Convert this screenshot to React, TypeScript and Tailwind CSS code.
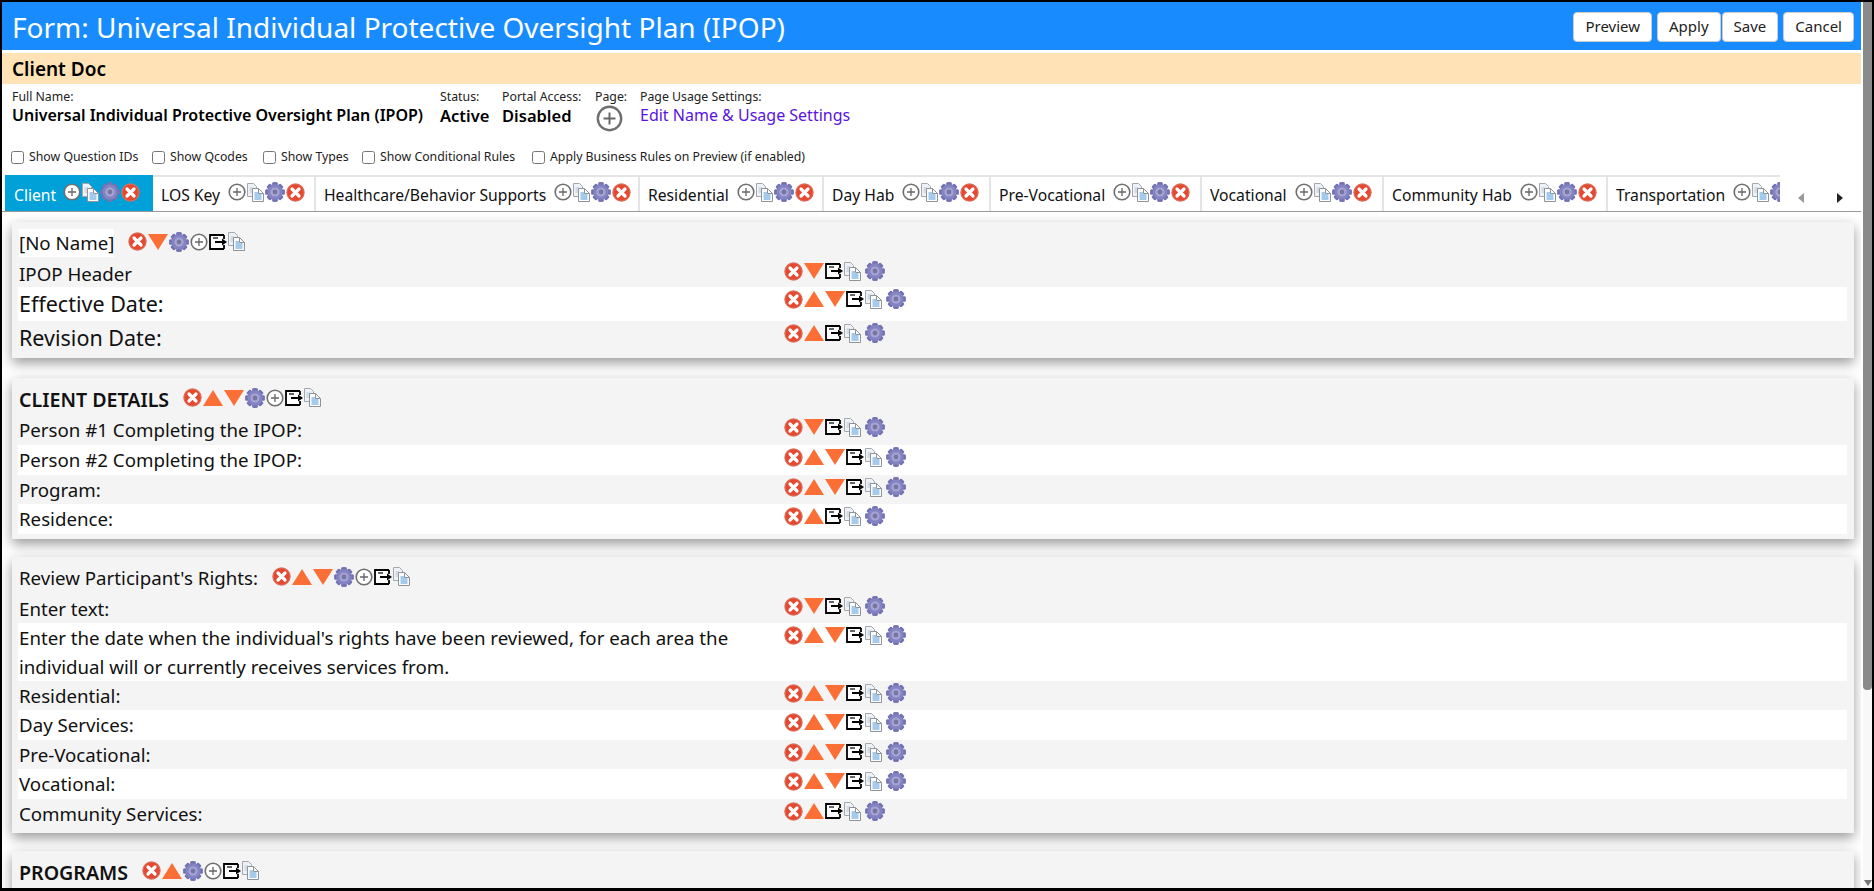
import React from 'react';

const XIcon = () => (
  <svg width="19" height="19" viewBox="0 0 19 19" className="shrink-0">
    <circle cx="9.5" cy="9.5" r="9.2" fill="#d9705f" />
    <circle cx="9.5" cy="9.5" r="8" fill="#e5492f" />
    <path d="M6 6 L13 13 M13 6 L6 13" stroke="#fff" strokeWidth="3.2" strokeLinecap="round" />
  </svg>
);

const UpIcon = () => (
  <svg width="20" height="16" viewBox="0 0 20 16" className="shrink-0">
    <polygon points="10,0 20,16 0,16" fill="#fb6f36" />
  </svg>
);

const DownIcon = () => (
  <svg width="20" height="16" viewBox="0 0 20 16" className="shrink-0">
    <polygon points="0,0 20,0 10,16" fill="#fb6f36" />
  </svg>
);

const GearIcon = () => (
  <svg width="20" height="20" viewBox="0 0 20 20" className="shrink-0">
    {[0, 45, 90, 135, 180, 225, 270, 315].map((a) => (
      <rect key={a} x="7.4" y="0.3" width="5.2" height="19.4" rx="1.2" fill="#7473b3" transform={`rotate(${a} 10 10)`} />
    ))}
    <circle cx="10" cy="10" r="7.4" fill="#8584c2" />
    <circle cx="10" cy="10" r="4.6" fill="#a5a4d4" />
    <circle cx="10" cy="10" r="2.4" fill="#77769f" />
  </svg>
);

const PlusIcon = ({ size = 18 }: { size?: number }) => (
  <svg width={size} height={size} viewBox="0 0 18 18" className="shrink-0">
    <circle cx="9" cy="9" r="7.8" fill="#fff" stroke="#6f6f6f" strokeWidth="1.6" />
    <path d="M9 5 V13 M5 9 H13" stroke="#666" strokeWidth="1.3" />
  </svg>
);

const ExportIcon = () => (
  <svg width="18" height="16" viewBox="0 0 18 16" className="shrink-0">
    <rect x="1" y="1" width="14" height="14" fill="#fff" />
    <path d="M15 1 H1 V15 H15 M15 1 V5 M15 11 V15" fill="none" stroke="#000" strokeWidth="1.8" />
    <path d="M4 4 H9" stroke="#000" strokeWidth="1.2" />
    <path d="M6 8 H14" stroke="#000" strokeWidth="2" />
    <polygon points="13,4.5 18,8 13,11.5" fill="#000" />
  </svg>
);

const CopyIcon = () => (
  <svg width="17" height="19" viewBox="0 0 17 19" className="shrink-0">
    <path d="M0.5 0.5 H6.5 L9.5 3.5 V13.5 H0.5 Z" fill="#eef1f5" stroke="#a4a8ae" />
    <path d="M2.5 5 H6 M2.5 7 H6 M2.5 9 H6" stroke="#b4c8da" strokeWidth="1" />
    <path d="M5.5 5.5 H11.5 L16.5 10.5 V18.5 H5.5 Z" fill="#fbfdff" stroke="#8f9398" />
    <path d="M11.5 5.5 V10.5 H16.5" fill="none" stroke="#8f9398" />
    <path d="M7.5 10 H11 M7.5 12 H14.5 M7.5 14 H14.5 M7.5 16 H14.5" stroke="#4f9ad8" strokeWidth="1.2" />
  </svg>
);

type Kind = 'x' | 'up' | 'down' | 'gear' | 'plus' | 'export' | 'copy';

const iconMap: Record<Kind, React.ReactNode> = {
  x: <XIcon />,
  up: <UpIcon />,
  down: <DownIcon />,
  gear: <GearIcon />,
  plus: <PlusIcon />,
  export: <ExportIcon />,
  copy: <CopyIcon />,
};

const Icons = ({ list, tight }: { list: Kind[]; tight?: boolean }) => (
  <div className="flex items-center gap-px">
    {list.map((k, i) => (
      <span key={i} className={`flex ${!tight && k === 'gear' && list[i - 1] === 'copy' ? 'ml-[3px]' : ''}`}>
        {iconMap[k]}
      </span>
    ))}
  </div>
);

const first: Kind[] = ['x', 'down', 'export', 'copy', 'gear'];
const middle: Kind[] = ['x', 'up', 'down', 'export', 'copy', 'gear'];
const last: Kind[] = ['x', 'up', 'export', 'copy', 'gear'];

const tabs = [
  { name: 'LOS Key', w: 'w-[163px]' },
  { name: 'Healthcare/Behavior Supports', w: 'w-[324px]' },
  { name: 'Residential', w: 'w-[184px]' },
  { name: 'Day Hab', w: 'w-[167px]' },
  { name: 'Pre-Vocational', w: 'w-[211px]' },
  { name: 'Vocational', w: 'w-[182px]' },
  { name: 'Community Hab', w: 'w-[224px]' },
  { name: 'Transportation', w: 'w-[190px]' },
];

type RowData = { label: string; big?: boolean; h: string; icons: Kind[] };

const Row = ({ row, odd }: { row: RowData; odd: boolean }) => (
  <div className={`flex items-start pl-[1px] ${row.h} ${odd ? 'bg-white' : ''}`}>
    <div className={`w-[765px] shrink-0 text-[#111] ${row.big ? 'text-[21.5px] leading-[33px]' : 'text-[18.7px] leading-[29px]'}`}>
      {row.label}
    </div>
    <div className="pt-[2px]">
      <Icons list={row.icons} />
    </div>
  </div>
);

const Section = ({ title, bold, hl, titleIcons, rows, h }: {
  title: string;
  bold?: boolean;
  hl?: boolean;
  titleIcons: Kind[];
  rows: RowData[];
  h: string;
}) => (
  <div className={`bg-[#f4f4f4] pl-[6px] pr-[7px] shadow-[0_5px_12px_rgba(0,0,0,0.4)] ${h}`}>
    <div className="flex h-[37px] items-center pl-[1px] pt-[5px]">
      <span className={`text-[#111] ${bold ? 'text-[19.6px] font-semibold' : 'text-[18.7px]'} ${hl ? 'bg-white' : ''}`}>{title}</span>
      <div className="mb-[3px] ml-[14px]">
        <Icons list={titleIcons} />
      </div>
    </div>
    {rows.map((r, i) => (
      <Row key={r.label} row={r} odd={i % 2 === 1} />
    ))}
  </div>
);

const Check = ({ label, w }: { label: string; w: string }) => (
  <label className={`flex items-center gap-[5px] text-[12.3px] text-[#222] ${w}`}>
    <input type="checkbox" className="m-0 h-[13px] w-[13px]" />
    {label}
  </label>
);

export default function App() {
  return (
    <div className="flex h-screen flex-col overflow-hidden border-x-2 border-t-2 border-b-[3px] border-black bg-white font-['Noto_Sans','Open_Sans',sans-serif]">
      <div className="flex min-h-0 flex-1">
        <div className="flex min-w-0 flex-1 flex-col">
          {/* Title bar */}
          <div className="flex h-[48px] shrink-0 items-center justify-between bg-[#188cff] pl-[10px] pr-[7px]">
            <h1 className="pt-[2px] text-[28px] font-normal text-white">Form: Universal Individual Protective Oversight Plan (IPOP)</h1>
            <div className="mt-[1px] flex items-center">
              {['Preview', 'Apply', 'Save', 'Cancel'].map((b, i) => (
                <button
                  key={b}
                  className={`h-[30px] rounded-[4px] border border-[#ccc] bg-white px-[11px] text-[15px] text-[#222] ${i === 0 ? 'mr-[5px]' : ''} ${i === 1 ? 'mr-px' : ''} ${i === 2 ? 'mr-[5px]' : ''}`}
                >
                  {b}
                </button>
              ))}
            </div>
          </div>

          {/* Client doc banner */}
          <div className="mt-[3px] flex h-[31px] shrink-0 items-center bg-[#ffe3b6] pl-[10px] pt-[2px] text-[19px] font-semibold text-black">
            Client Doc
          </div>

          {/* Meta */}
          <div className="flex shrink-0 pl-[10px] pt-[5px]">
            <div className="w-[428px]">
              <div className="text-[12.3px] leading-[16px] text-[#222]">Full Name:</div>
              <div className="text-[16px] font-semibold leading-[21px] text-black">Universal Individual Protective Oversight Plan (IPOP)</div>
            </div>
            <div className="w-[62px]">
              <div className="text-[12.3px] leading-[16px] text-[#222]">Status:</div>
              <div className="text-[16.5px] font-semibold leading-[21px] text-black">Active</div>
            </div>
            <div className="w-[93px]">
              <div className="text-[12.3px] leading-[16px] text-[#222]">Portal Access:</div>
              <div className="text-[16.5px] font-semibold leading-[21px] text-black">Disabled</div>
            </div>
            <div className="w-[45px]">
              <div className="text-[12.3px] leading-[16px] text-[#222]">Page:</div>
              <div className="pl-[1px]"><PlusIcon size={27} /></div>
            </div>
            <div>
              <div className="text-[12.3px] leading-[16px] text-[#222]">Page Usage Settings:</div>
              <div className="text-[16px] leading-[21px] text-[#5a14e0]">Edit Name &amp; Usage Settings</div>
            </div>
          </div>

          {/* Options */}
          <div className="mt-[16px] flex shrink-0 pl-[9px]">
            <Check label="Show Question IDs" w="w-[141px]" />
            <Check label="Show Qcodes" w="w-[111px]" />
            <Check label="Show Types" w="w-[99px]" />
            <Check label="Show Conditional Rules" w="w-[170px]" />
            <Check label="Apply Business Rules on Preview (if enabled)" w="w-[320px]" />
          </div>

          {/* Tabs */}
          <div className="mt-[9px] flex h-[37px] shrink-0 border-b border-[#999]">
            <div className="flex w-[1778px] shrink-0 overflow-hidden pl-[3px]">
              <div className="flex h-full w-[148px] shrink-0 items-start bg-[#00a0d8] pl-[9px] pt-[7px] text-[15.7px] text-white">
                <span className="mr-[7px] mt-[2px]">Client</span>
                <Icons list={['plus', 'copy', 'gear', 'x']} tight />
              </div>
              {tabs.map((t) => (
                <div key={t.name} className={`flex h-full shrink-0 items-start border-r-2 border-t-2 border-[#e4e4e4] pl-[8px] pt-[5px] text-[15.7px] text-[#111] ${t.w}`}>
                  <span className="mr-[8px] mt-[2px] whitespace-nowrap">{t.name}</span>
                  <Icons list={['plus', 'copy', 'gear', 'x']} tight />
                </div>
              ))}
            </div>
            <div className="flex flex-1 items-center justify-between px-[18px] pt-[10px]">
              <span className="h-0 w-0 border-y-[5px] border-r-[6px] border-y-transparent border-r-[#999]" />
              <span className="h-0 w-0 border-y-[5px] border-l-[6px] border-y-transparent border-l-[#222]" />
            </div>
          </div>

          {/* Sections */}
          <div className="flex min-h-0 flex-1 flex-col gap-[18px] overflow-hidden pl-[10px] pr-[7px] pt-[10px]">
            <Section
              title="[No Name]"
              hl
              titleIcons={['x', 'down', 'gear', 'plus', 'export', 'copy']}
              h="mb-[2px] h-[136px] shrink-0"
              rows={[
                { label: 'IPOP Header', h: 'h-[28px]', icons: first },
                { label: 'Effective Date:', big: true, h: 'h-[34px]', icons: middle },
                { label: 'Revision Date:', big: true, h: 'h-[34px]', icons: last },
              ]}
            />
            <Section
              title="CLIENT DETAILS"
              bold
              titleIcons={['x', 'up', 'down', 'gear', 'plus', 'export', 'copy']}
              h="h-[161px] shrink-0"
              rows={[
                { label: 'Person #1 Completing the IPOP:', h: 'h-[30px]', icons: first },
                { label: 'Person #2 Completing the IPOP:', h: 'h-[30px]', icons: middle },
                { label: 'Program:', h: 'h-[29px]', icons: middle },
                { label: 'Residence:', h: 'h-[30px]', icons: last },
              ]}
            />
            <Section
              title="Review Participant's Rights:"
              titleIcons={['x', 'up', 'down', 'gear', 'plus', 'export', 'copy']}
              h="h-[276px] shrink-0"
              rows={[
                { label: 'Enter text:', h: 'h-[29px]', icons: first },
                { label: "Enter the date when the individual's rights have been reviewed, for each area the individual will or currently receives services from.", h: 'h-[58px]', icons: middle },
                { label: 'Residential:', h: 'h-[29px]', icons: middle },
                { label: 'Day Services:', h: 'h-[30px]', icons: middle },
                { label: 'Pre-Vocational:', h: 'h-[29px]', icons: middle },
                { label: 'Vocational:', h: 'h-[30px]', icons: middle },
                { label: 'Community Services:', h: 'h-[29px]', icons: last },
              ]}
            />
            <Section
              title="PROGRAMS"
              bold
              titleIcons={['x', 'up', 'gear', 'plus', 'export', 'copy']}
              h="h-[80px] shrink-0"
              rows={[]}
            />
          </div>
        </div>

        {/* Scrollbar */}
        <div className="flex w-[11px] shrink-0 flex-col border-l-2 border-white bg-[#f8f8f8]">
          <div className="h-[688px] rounded-b-[4px] bg-[#8a8a8a]" />
          <div className="flex-1" />
          <span className="mx-auto mb-[2px] h-0 w-0 border-x-[4px] border-t-[6px] border-x-transparent border-t-[#777]" />
        </div>
      </div>
    </div>
  );
}
